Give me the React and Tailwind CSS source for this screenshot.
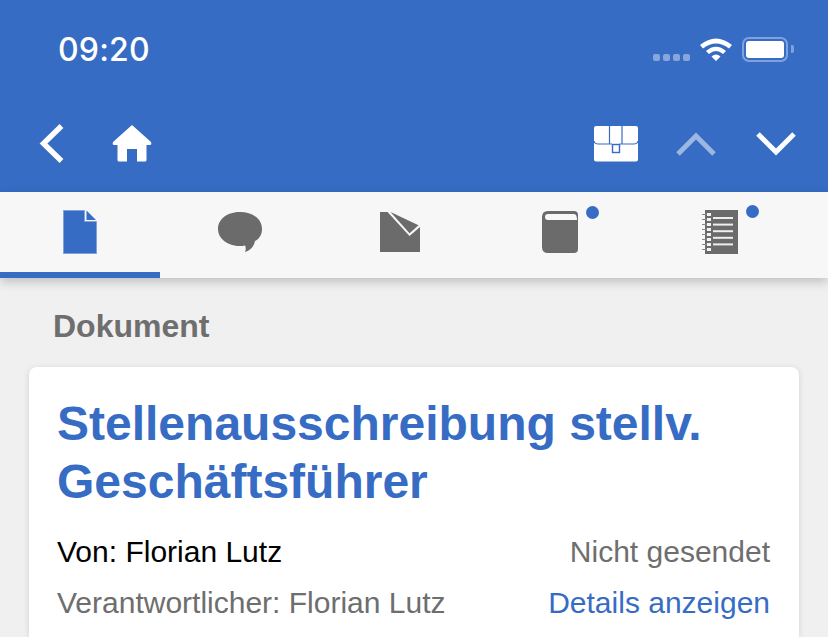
const Blue = "#376cc4";

function Back() {
  return (
    <svg width="26" height="40" viewBox="0 0 26 40" className="block">
      <path d="M23.5 2 L5.5 19.5 L23.5 37" fill="none" stroke="#fff" strokeWidth="5.4" />
    </svg>
  );
}
function Home() {
  return (
    <svg width="40" height="38" viewBox="0 0 40 38" className="block">
      <path d="M20 0 L39 17 Q40 20 38 20 L34.5 20 L34.5 35 Q34.5 36.5 33 36.5 L25 36.5 L25 24 L15 24 L15 36.5 L7 36.5 Q5.5 36.5 5.5 35 L5.5 20 L2 20 Q0 20 1 17 Z" fill="#fff" />
    </svg>
  );
}
function Case() {
  return (
    <svg width="44" height="36" viewBox="0 0 44 36" className="block">
      <rect x="0" y="0" width="44" height="35.5" rx="2" fill="#fff" />
      <path d="M0 15 Q0.5 18 4 18 H18 M25.5 18 H40 Q43.5 18 44 15 M15.5 0 V18 M28 0 V18" fill="none" stroke={Blue} strokeWidth="1.2" />
      <rect x="18.5" y="18.5" width="7" height="8" fill="#fff" stroke={Blue} strokeWidth="1.4" />
    </svg>
  );
}
function Chev({ up, cls }) {
  return (
    <svg width="40" height="24" viewBox="0 0 40 24" className={cls}>
      <path d={up ? "M2 22 L20 4 L38 22" : "M2 2 L20 20 L38 2"} fill="none" stroke="#fff" strokeWidth="5" />
    </svg>
  );
}
function Wifi() {
  return (
    <svg width="32" height="24" viewBox="0 0 32 24" className="block">
      <path d="M0 8 Q16 -5 32 8 L29 11.5 Q16 1.5 3 11.5Z M6 14 Q16 5.5 26 14 L23 17 Q16 11 9 17Z M11.5 19.5 Q16 15.5 20.5 19.5 L16 24Z" fill="#fff" />
    </svg>
  );
}
function Doc() {
  return (
    <svg width="34" height="44" viewBox="0 0 34 44" className="block">
      <path d="M0.5 0.5 H21.5 V11.5 H33.5 V43.5 H0.5Z" fill={Blue} stroke="#7fa2dc" strokeWidth="1" />
      <path d="M23.5 0.5 L33 10 H23.5Z" fill={Blue} />
    </svg>
  );
}
function Chat() {
  return (
    <svg width="44" height="40" viewBox="0 0 44 40" className="block">
      <path d="M22 0 C34 0 44 6.5 44 17 C44 23 41 27 37 29 C36 34 33 38 27 40 C28 37 28 35.5 27 33.5 C25 34 24 34 22 34 C10 34 0 27 0 17 C0 6.5 10 0 22 0Z" fill="#6b6b6b" />
    </svg>
  );
}
function Mail() {
  return (
    <svg width="40" height="40" viewBox="0 0 40 40" className="block">
      <path d="M0 0 H7.5 L29.5 24 L40 15 V40 H0Z" fill="#6b6b6b" />
      <path d="M10.5 0 L38.5 13.3 L29.5 21.3Z" fill="#6b6b6b" />
    </svg>
  );
}
function Book() {
  return (
    <svg width="36" height="42" viewBox="0 0 36 42" className="block">
      <path d="M6 0 H32 Q36 0 36 4 V38 Q36 42 32 42 H6 Q0 42 0 36 V6 Q0 0 6 0Z" fill="#6b6b6b" />
      <path d="M6 3 H32 Q35 3 35 9 H6 Q3 9 3 6 Q3 3 6 3Z" fill="#f7f7f7" />
    </svg>
  );
}
function Notebook() {
  const lines = [0, 1, 2, 3, 4];
  const rings = [0, 1, 2, 3, 4, 5, 6, 7];
  return (
    <svg width="36" height="44" viewBox="0 0 36 44" className="block">
      <rect x="3" y="0" width="33" height="44" fill="#6b6b6b" />
      {rings.map((i) => (
        <g key={i}>
          <rect x="0" y={4 + i * 5} width="5" height="1" fill="#888" />
          <rect x="5" y={3 + i * 5} width="4" height="3" fill="#f2f2f2" />
        </g>
      ))}
      {lines.map((i) => (
        <rect key={i} x="11" y={7 + i * 6.6} width="20" height="2" fill="#eeeeee" />
      ))}
    </svg>
  );
}

function Tab({ active, dot, children }) {
  return (
    <div className={"w-[160px] shrink-0 h-full flex items-center justify-center " + (active ? "border-b-[6px] border-[#376cc4]" : "pb-[6px]")}>
      <div className="relative">
        {children}
        {dot && <span className="absolute top-[-5px] right-[-21px] w-[13px] h-[13px] rounded-full bg-[#376cc4]" />}
      </div>
    </div>
  );
}

export default function App() {
  return (
    <div className="w-[828px] h-[637px] overflow-hidden bg-[#f0f0f0] flex flex-col" style={{ fontFamily: '"Liberation Sans", Arial, sans-serif' }}>
      <header className="h-[192px] shrink-0 bg-[#376cc4] flex flex-col">
        <div className="h-[102px] flex justify-between pl-[58px] pr-[34px]">
          <span className="text-white text-[32px] leading-[38px] mt-[31px] font-medium font-['Inter'] tracking-[0.2px]">09:20</span>
          <div className="flex items-start mt-[36px]">
            <div className="flex gap-[3px] mt-[18px] mr-[10px] opacity-40">
              <i className="block w-[7px] h-[7px] rounded-[2px] bg-white" />
              <i className="block w-[7px] h-[7px] rounded-[2px] bg-white" />
              <i className="block w-[7px] h-[7px] rounded-[2px] bg-white" />
              <i className="block w-[7px] h-[7px] rounded-[2px] bg-white" />
            </div>
            <div className="mt-px"><Wifi /></div>
            <div className="ml-[10px] mt-px w-[46px] h-[25px] rounded-[7px] border-2 border-[#7fa2dc] p-[2px]">
              <div className="w-full h-full rounded-[3px] bg-white" />
            </div>
            <div className="ml-[3px] mt-[9px] w-[3px] h-[8px] rounded-r-[2px] bg-[#7fa2dc]" />
          </div>
        </div>
        <div className="flex-1 flex items-start pl-[38px] pr-[32px] justify-between">
          <div className="flex items-start gap-[48px] mt-[22px]">
            <Back />
            <div className="mt-px"><Home /></div>
          </div>
          <div className="flex items-start mt-[24px]">
            <Case />
            <Chev up cls="block mt-[6px] ml-[38px] opacity-50" />
            <Chev cls="block mt-[6px] ml-[40px]" />
          </div>
        </div>
      </header>

      <nav className="h-[86px] shrink-0 bg-[#f7f7f7] flex shadow-[0_4px_10px_rgba(0,0,0,0.2)] relative z-10">
        <Tab active><Doc /></Tab>
        <Tab><Chat /></Tab>
        <Tab><Mail /></Tab>
        <Tab dot><Book /></Tab>
        <Tab dot><Notebook /></Tab>
      </nav>

      <h2 className="mt-[30px] ml-[53px] text-[#6e6e6e] font-bold text-[32px] leading-[36px]">Dokument</h2>

      <section className="mx-[29px] mt-[23px] flex-1 bg-white rounded-t-[8px] shadow-[0_1px_6px_rgba(0,0,0,0.12)] pl-[28px] pr-[29px] pt-[28px]">
        <h1 className="text-[#376cc4] font-bold text-[48px] leading-[58px]">Stellenausschreibung stellv. Geschäftsführer</h1>
        <div className="flex justify-between mt-[24px] text-[30px] leading-[34px]">
          <span className="text-black">Von: Florian Lutz</span>
          <span className="text-[#6e6e6e]">Nicht gesendet</span>
        </div>
        <div className="flex justify-between mt-[17px] text-[30px] leading-[34px]">
          <span className="text-[#6e6e6e]">Verantwortlicher: Florian Lutz</span>
          <span className="text-[#376cc4]">Details anzeigen</span>
        </div>
      </section>
    </div>
  );
}
